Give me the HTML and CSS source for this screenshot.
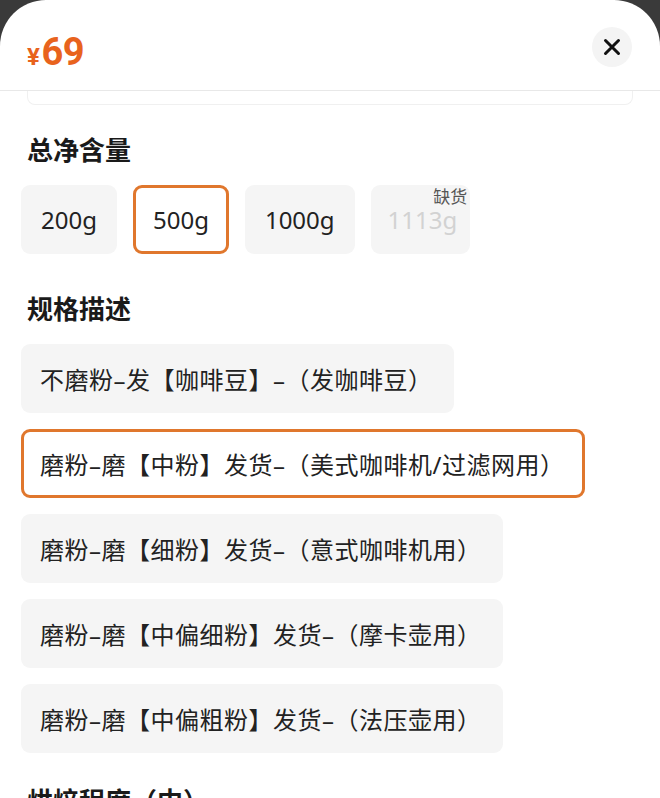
FILE: index.html
```html
<!DOCTYPE html>
<html lang="zh-CN">
<head>
  <meta charset="UTF-8" />
  <meta name="viewport" content="width=device-width, initial-scale=1.0"/>
  <title>选择规格</title>
  <link rel="stylesheet" href="styles.css">
</head>
<body>

  <div class="sheet">

    <!-- Header -->
    <div class="sheet-header">
      <div class="price"><span class="price-unit">¥</span>69</div>
      <button class="close-btn" aria-label="关闭">
        <svg width="18" height="18" viewBox="0 0 18 18">
          <path d="M2.5 2.5 L15.5 15.5 M15.5 2.5 L2.5 15.5" stroke="#111" stroke-width="3" stroke-linecap="round" fill="none"/>
        </svg>
      </button>
    </div>

    <div class="prev-card"></div>

    <!-- Weight -->
    <div class="section section-weight">
      <h2 class="section-title">总净含量</h2>
      <div class="chips">
        <div class="chip">200g</div>
        <div class="chip active">500g</div>
        <div class="chip">1000g</div>
        <div class="chip disabled">1113g<span class="badge">缺货</span></div>
      </div>
    </div>

    <!-- Grind -->
    <div class="section section-spec">
      <h2 class="section-title">规格描述</h2>
      <div class="options">
        <div class="option">不磨粉–发【咖啡豆】–（发咖啡豆）</div>
        <div class="option active">磨粉–磨【中粉】发货–（美式咖啡机/过滤网用）</div>
        <div class="option">磨粉–磨【细粉】发货–（意式咖啡机用）</div>
        <div class="option">磨粉–磨【中偏细粉】发货–（摩卡壶用）</div>
        <div class="option">磨粉–磨【中偏粗粉】发货–（法压壶用）</div>
      </div>
    </div>

    <div class="section">
      <h2 class="section-title">烘焙程度（中）</h2>
    </div>

  </div>

</body>
</html>
```

FILE: styles.css
```css
html, body {
  margin: 0;
  height: 100%;
}

body {
  font-family: "Noto Sans", "Noto Sans CJK SC", sans-serif;
  background-color: #3a3a3a;
  color: #222;
  overflow: hidden;
}

.sheet {
  background-color: #fff;
  border-radius: 46px 46px 0 0;
  min-height: 100%;
}

.sheet-header {
  display: flex;
  justify-content: space-between;
  align-items: flex-start;
  height: 90px;
  padding: 0 28px 0 27px;
  border-bottom: 1px solid #e8e8e8;
}

.price {
  margin-top: 33px;
  font-family: Roboto, "Noto Sans", sans-serif;
  font-weight: bold;
  font-size: 38px;
  line-height: 38px;
  color: #e8631d;
  letter-spacing: -0.5px;
}

.price-unit {
  font-size: 24px;
  margin-right: 2px;
}

.close-btn {
  margin-top: 27px;
  width: 40px;
  height: 40px;
  border: none;
  border-radius: 50%;
  background-color: #f4f4f4;
  display: flex;
  align-items: center;
  justify-content: center;
  padding: 0;
  cursor: pointer;
}

.prev-card {
  height: 13px;
  margin: 0 27px;
  border: 1px solid #f0f0f0;
  border-top: none;
  border-radius: 0 0 8px 8px;
}

.section {
  padding: 0 21px;
}

.section-weight {
  margin-top: 27px;
  margin-bottom: 37px;
}

.section-spec {
  margin-bottom: 30px;
}

.section-title {
  margin: 0 0 17px 6px;
  font-size: 26px;
  line-height: 36px;
  font-weight: 600;
  color: #1a1a1a;
}

.chips {
  display: flex;
  gap: 16px;
}

.chip {
  position: relative;
  box-sizing: border-box;
  height: 69px;
  padding: 0 17px;
  display: flex;
  align-items: center;
  font-size: 24px;
  background-color: #f5f5f5;
  border: 3px solid transparent;
  border-radius: 9px;
}

.chip.active,
.option.active {
  background-color: #fff;
  border-color: #e0772d;
}

.chip.disabled {
  padding: 0 10px 0 14px;
  color: #d2d2d2;
}

.badge {
  position: absolute;
  top: -1px;
  right: 0;
  font-size: 17px;
  line-height: 20px;
  color: #555;
}

.options {
  display: flex;
  flex-direction: column;
  align-items: flex-start;
  gap: 16px;
}

.option {
  box-sizing: border-box;
  height: 69px;
  padding: 0 18px 0 16px;
  display: flex;
  align-items: center;
  font-size: 24px;
  letter-spacing: 0.5px;
  background-color: #f5f5f5;
  border: 3px solid transparent;
  border-radius: 9px;
}
```
